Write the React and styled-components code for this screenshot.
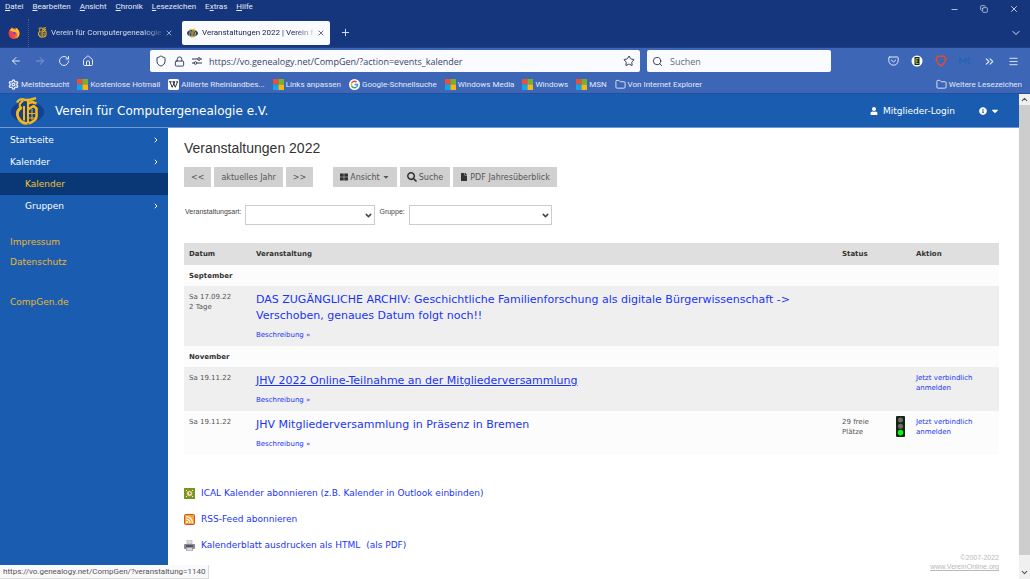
import React from 'react'
import styled, { createGlobalStyle } from 'styled-components'
import {
    ArrowLeft, ArrowRight, RotateCw, House, Shield, Lock, Star, Search, Folder, Settings,
    ChevronDown, ChevronUp, ChevronRight, ChevronsRight, Menu, Minus, X, Plus, Copy
} from 'lucide-react'
import { FaUser, FaInfoCircle, FaCaretDown, FaThLarge, FaSearch, FaFile } from 'react-icons/fa'

const GlobalStyle = createGlobalStyle`
    * {
        box-sizing: border-box;
    }

    body {
        margin: 0;
        background: #fff;
        font-family: "DejaVu Sans", Verdana, sans-serif;
        color: #444;
    }

    a {
        color: #1a35f5;
        text-decoration: none;
    }

    button, input, select {
        font: inherit;
        margin: 0;
        border: none;
        border-radius: 0;
        padding: 0;
    }

    button {
        background: none;
        color: inherit;
    }

    svg {
        flex: none;
        display: block;
    }
`

const Window = styled.div`
    min-height: 100vh;
    display: flex;
    flex-direction: column;
`

/* browser chrome */

const Chrome = styled.header`
    font-family: Roboto, "Segoe UI", sans-serif;
    font-size: 8px;
    color: #e4eaf8;
    background: #15367c;
`

const TitleBar = styled.div`
    height: 18px;
    display: flex;
    justify-content: space-between;
    padding: 0 11px 0 5px;
`

const MenuBar = styled.nav`
    display: flex;
    gap: 9px;
    line-height: 13px;
`

const WindowButtons = styled.div`
    display: flex;
    align-items: center;
    gap: 21px;
`

const TabStrip = styled.div`
    height: 30px;
    display: flex;
    align-items: center;
    padding: 0 8px;
    border-bottom: 1px solid #1e3f8a;
`

const Pinned = styled.div`
    height: 28px;
    width: 21px;
    display: flex;
    align-items: center;
    border-right: 1px dotted #47609a;
`

const Tab = styled.div`
    width: 148px;
    height: 24px;
    margin-left: ${p => p.$active ? 5 : 0}px;
    padding: 0 6px 0 ${p => p.$active ? 5 : 9}px;
    display: flex;
    align-items: center;
    gap: 4px;
    border-radius: 2px;
    color: ${p => p.$active ? '#22284a' : '#d3dcf0'};
    background: ${p => p.$active ? '#f9fbff' : 'none'};
`

const TabTitle = styled.span`
    flex: 1;
    white-space: nowrap;
    mask-image: linear-gradient(to right, #000 84%, rgba(0, 0, 0, 0.2));
`

const NewTab = styled.button`
    margin-left: 10px;
`

const ListTabs = styled.button`
    margin-left: auto;
`

const Toolbar = styled.div`
    height: 28px;
    display: flex;
    align-items: center;
    background: #3d66b6;
    padding: 0 11px 2px 10px;
`

const NavButtons = styled.div`
    width: 140px;
    display: flex;
    gap: 12px;

    button:nth-child(2) {
        opacity: 0.4;
    }
`

const Field = styled.label`
    flex: ${p => p.$grow};
    height: 22px;
    margin-left: ${p => p.$gap}px;
    padding: 0 5px;
    display: flex;
    align-items: center;
    gap: 7px;
    border-radius: 2px;
    background: #f9fbff;
    color: #33384e;

    input {
        flex: 1;
        min-width: 0;
        background: none;
        outline: none;
        font: 9px "Open Sans", "Segoe UI", sans-serif;
        color: #3a4366;
    }

    input::placeholder {
        color: #666b7c;
        opacity: 1;
    }
`

const Extensions = styled.div`
    width: 188px;
    display: flex;
    justify-content: flex-end;
    align-items: center;
    gap: 12px;
`

const Bookmarks = styled.nav`
    height: 18px;
    display: flex;
    align-items: center;
    gap: 8px;
    padding: 0 8px 1px;
    background: #3d66b6;
    border-bottom: 1px solid #234d9f;
`

const Bookmark = styled.a`
    display: flex;
    align-items: center;
    gap: 2px;
    white-space: nowrap;
    color: #e4eaf8;
    margin-left: ${p => p.$last ? 'auto' : 0};
`

/* web page */

const View = styled.div`
    flex: 1;
    display: flex;
`

const Page = styled.div`
    flex: 1;
    display: flex;
    flex-direction: column;
`

const PageHeader = styled.header`
    height: 34px;
    display: flex;
    align-items: center;
    padding: 0 19px 0 11px;
    color: #fff;
    background: #1a5cb0;
    border-bottom: 1px solid #6f98d2;
`

const SiteName = styled.div`
    margin-left: 11px;
    font-size: 12px;
`

const Login = styled.a`
    margin-left: auto;
    display: flex;
    align-items: center;
    gap: 5px;
    font-size: 9px;
    color: #fff;
`

const Info = styled.button`
    margin-left: 24px;
    display: flex;
    align-items: center;
    gap: 3px;
`

const Columns = styled.div`
    flex: 1;
    display: flex;
`

const Sidebar = styled.nav`
    width: 168px;
    padding-top: 1px;
    background: #1a5cb0;
    font-size: 9px;
`

const NavItem = styled.a`
    height: 22px;
    padding: 0 8px 0 ${p => p.$sub ? 25 : 10}px;
    display: flex;
    align-items: center;
    justify-content: space-between;
    color: ${p => p.$current ? '#f2c230' : '#fff'};
    background: ${p => p.$current ? '#0a3877' : 'none'};
`

const SideLinks = styled.div`
    margin-top: ${p => p.$gap}px;
    padding-left: 10px;
    line-height: 20px;

    a {
        display: block;
        color: #e8b72f;
    }
`

const Main = styled.main`
    flex: 1;
    display: flex;
    flex-direction: column;
    padding: 10px 20px 8px 16px;
`

const Title = styled.h1`
    margin: 0 0 8px;
    font: 14px/21px "Liberation Sans", Arial, sans-serif;
    color: #333;
`

const Actions = styled.div`
    display: flex;
    gap: 3px;
`

const ActionGroup = styled.div`
    display: flex;
    gap: 3px;
    margin-right: 17px;
`

const Action = styled.button`
    height: 20px;
    padding: 0 7px;
    display: flex;
    align-items: center;
    gap: 2px;
    font-size: 8px;
    color: #555;
    background: #d0d0d0;
`

const Filters = styled.form`
    display: flex;
    margin: 18px 0 18px 1px;
    gap: 4px;
    font: 7px/14px "Liberation Sans", Arial, sans-serif;
`

const SelectBox = styled.div`
    display: grid;
    align-items: center;
    justify-items: end;
    width: ${p => p.$width}px;

    select, svg {
        grid-area: 1 / 1;
    }

    select {
        width: 100%;
        height: 20px;
        appearance: none;
        border: 1px solid #ccc;
        background: #fff;
    }

    svg {
        margin-right: 2px;
        pointer-events: none;
    }
`

const Events = styled.table`
    width: 100%;
    table-layout: fixed;
    border-collapse: collapse;
    font-size: 7px;
    line-height: 10px;
    color: #555;

    th, td {
        padding: 6px 5px;
        text-align: left;
        vertical-align: top;
    }

    th {
        color: #333;
        background: #fcfcfc;
    }

    tbody th {
        padding-bottom: 5px;
    }

    thead th {
        background: #dfdfdf;
    }
`

const EventRow = styled.tr`
    background: ${p => p.$shade ? '#efefef' : '#fcfcfc'};

    td:nth-child(4) {
        padding: 5px 0;
    }
`

const EventTitle = styled.a`
    display: block;
    margin-bottom: 6px;
    font-size: 11px;
    line-height: 16px;
    text-decoration: ${p => p.$hovered ? 'underline' : 'none'};
`

const Exports = styled.div`
    display: grid;
    gap: 10px;
    margin-top: 30px;
    font-size: 9px;
    line-height: 16px;
`

const ExportRow = styled.div`
    display: flex;
    align-items: center;
    gap: 6px;
`

const Credits = styled.footer`
    margin-top: auto;
    text-align: right;
    font: 7px/9px "Liberation Sans", Arial, sans-serif;
    color: #b8b8b8;

    a {
        display: block;
        color: #b8b8b8;
        text-decoration: underline;
    }
`

const Scrollbar = styled.div`
    width: 11px;
    display: flex;
    flex-direction: column;
    align-items: center;
    background: #f0f0f0;
    color: #555;
    padding: 1px 0 2px;
    gap: 1px;
`

const Thumb = styled.div`
    flex: 1;
    width: 11px;
    margin-bottom: 12px;
    background: #cdcdcd;
`

const StatusBubble = styled.div`
    position: fixed;
    left: 0;
    bottom: 0;
    height: 14px;
    padding: 0 3px;
    font: 8px/14px Roboto, "Segoe UI", sans-serif;
    color: #555;
    background: #f9f9fb;
    border: solid #dcdcdc;
    border-width: 0 1px 1px 0;
`

const Logo = ({ width = 33, height = 28, plain }) => (
    <svg width={width} height={height} viewBox={plain ? '5 0 23 28' : '0 0 33 28'}>
        {!plain && <ellipse cx="16.500" cy="15" rx="16.500" ry="10.500" fill="#163f8c" />}
        <g fill="none" stroke="#f6b818" strokeLinejoin="round">
            <path d="M6 5.500C8 1.500 11 2 14.500 2.800S20 2.500 25 1.200" strokeWidth="2.400" />
            <path d="M12 3.500 8.800 7v2.500l2 1.500" strokeWidth="2" />
            <path d="M10.500 10.500C6.500 13 5.500 17 7.500 21s5.500 5.500 9 5.300" strokeWidth="2.800" />
            <path d="M13 9v14.500M17 4v22" strokeWidth="2" />
            <path d="M17 6.500l4-1.500 4.500 1.500M17 12.500l5.500-3.500 3 2.500v8c0 3-4 5.500-8 7" strokeWidth="2.600" />
            <path d="M21 12v11M17 16.500h7M17 21h7" strokeWidth="1" />
        </g>
    </svg>
)

const Firefox = () => (
    <svg width="12" height="12" viewBox="0 0 24 24">
        <circle cx="12" cy="13" r="10.500" fill="#ff6a2b" />
        <path d="M3 8c2-5 4-5 5-7 1 4 5 3 7 5s1-3 0-5c6 3 9 8 8 14-1 4-4 7-7 8 4-4 4-10 0-12-5-2-9 1-13-3z" fill="#ffbe2e" />
        <path d="M1.500 13C1 9 3 6 4 5c0 3 4 4 7 5l-3 4c1 4 6 5 9 2-2 5-9 8-13 3-1-1-2-3-2.500-6z" fill="#f33b4c" />
        <circle cx="12.500" cy="12.500" r="3" fill="#7646d8" />
    </svg>
)

const Microsoft = () => (
    <svg width="11" height="11" viewBox="0 0 12 12">
        <path fill="#e8503a" d="M0 0h6v6H0z" />
        <path fill="#7cb02c" d="M6 0h6v6H6z" />
        <path fill="#12a5ee" d="M0 6h6v6H0z" />
        <path fill="#f6b714" d="M6 6h6v6H6z" />
    </svg>
)

const Wikipedia = () => (
    <svg width="11" height="11" viewBox="0 0 12 12">
        <rect width="12" height="12" rx="2" fill="#fff" />
        <path d="M1 3h3M5 3h2.500M9 3h2M2.300 3l2.200 6L7.500 3M5.500 3L8 9l2.300-6" fill="none" stroke="#222" />
    </svg>
)

const Google = () => (
    <svg width="11" height="11" viewBox="0 0 12 12">
        <circle cx="6" cy="6" r="6" fill="#fff" />
        <g fill="none" strokeWidth="1.500">
            <path d="M8.300 3.400A3.500 3.500 0 0 0 2.800 4.600" stroke="#ea4335" />
            <path d="M2.800 4.600a3.500 3.500 0 0 0 0 2.900" stroke="#fbbc05" />
            <path d="M2.800 7.500a3.500 3.500 0 0 0 5.400 1.200" stroke="#34a853" />
            <path d="M8.200 8.700A3.500 3.500 0 0 0 9.400 6H6" stroke="#4285f4" />
        </g>
    </svg>
)

const Pocket = () => (
    <svg width="11" height="10" viewBox="0 0 11 10" fill="none" stroke="currentColor" strokeLinecap="round" strokeLinejoin="round">
        <path d="M1.500 1h8q.7 0 .7.700V4.500a4.700 4.700 0 0 1-9.400 0V1.700Q.8 1 1.500 1zM3.300 4l2.200 2 2.200-2" />
    </svg>
)

const Permissions = () => (
    <svg width="10" height="8" viewBox="0 0 10 8" fill="none" stroke="#33384e">
        <path d="M0 2h5.500M5 6h5M0 6h2M8.500 2H10" />
        <circle cx="7" cy="2" r="1.300" />
        <circle cx="3.500" cy="6" r="1.300" />
    </svg>
)

const TrafficLight = () => (
    <svg width="9" height="21" viewBox="0 0 9 21">
        <rect width="9" height="21" rx="1" fill="#152415" />
        <circle cx="4.500" cy="4" r="2.500" fill="#6b706b" />
        <circle cx="4.500" cy="10.300" r="2.500" fill="#6b706b" />
        <circle cx="4.500" cy="16.600" r="2.800" fill="#0af50a" />
    </svg>
)

const IcalIcon = () => (
    <svg width="11" height="11" viewBox="0 0 11 11">
        <rect width="11" height="11" fill="#6d9a22" />
        <path d="M2 2l7 7M9 2L2 9" stroke="#fff3c0" />
        <circle cx="5.500" cy="5.500" r="2.800" fill="#f5e6b0" stroke="#b07f28" strokeWidth=".7" />
        <path d="M5.500 4v2l1.500-1" fill="none" stroke="#7a6420" strokeWidth=".7" />
    </svg>
)

const RssIcon = () => (
    <svg width="11" height="11" viewBox="0 0 11 11">
        <rect x=".5" y=".5" width="10" height="10" rx="1" fill="#f0a63c" stroke="#d9501f" />
        <circle cx="3" cy="8" r="1" fill="#fff" />
        <path d="M2 5a4 4 0 0 1 4 4M2 2.500A6.500 6.500 0 0 1 8.500 9" fill="none" stroke="#fff" strokeWidth="1.200" />
    </svg>
)

const PrinterIcon = () => (
    <svg width="11" height="11" viewBox="0 0 11 11">
        <path d="M3 0h5v4H3z" fill="#ddd" stroke="#aaa" strokeWidth=".6" />
        <rect y="4" width="11" height="5" rx="1" fill="#85888d" />
        <path d="M2 5h7v2H2z" fill="#55585e" />
        <path d="M2.500 7.500h6V11h-6z" fill="#d4d8de" stroke="#888" strokeWidth=".6" />
    </svg>
)

const menus = [['', 'D', 'atei'], ['', 'B', 'earbeiten'], ['', 'A', 'nsicht'], ['', 'C', 'hronik'], ['', 'L', 'esezeichen'], ['E', 'x', 'tras'], ['', 'H', 'ilfe']]

const bookmarks = [
    ['Meistbesucht', <Settings size={11} strokeWidth={3} />],
    ['Kostenlose Hotmail', <Microsoft />],
    ['Alliierte Rheinlandbes...', <Wikipedia />],
    ['Links anpassen', <Microsoft />],
    ['Google-Schnellsuche', <Google />],
    ['Windows Media', <Microsoft />],
    ['Windows', <Microsoft />],
    ['MSN', <Microsoft />],
    ['Von Internet Explorer', <Folder size={11} />],
    ['Weitere Lesezeichen', <Folder size={11} />]
]

const months = [
    {
        name: 'September',
        events: [
            { date: 'Sa 17.09.22', days: '2 Tage', shade: true, title: 'DAS ZUGÄNGLICHE ARCHIV: Geschichtliche Familienforschung als digitale Bürgerwissenschaft -> Verschoben, genaues Datum folgt noch!!' }
        ]
    },
    {
        name: 'November',
        events: [
            { date: 'Sa 19.11.22', shade: true, hovered: true, open: true, title: 'JHV 2022 Online-Teilnahme an der Mitgliederversammlung' },
            { date: 'Sa 19.11.22', status: '29 freie Plätze', open: true, title: 'JHV Mitgliederversammlung in Präsenz in Bremen' }
        ]
    }
]

const BrowserChrome = () => (
    <Chrome>
        <TitleBar>
            <MenuBar>
                {menus.map(([before, key, after]) => <span key={key}>{before}<u>{key}</u>{after}</span>)}
            </MenuBar>
            <WindowButtons>
                <button aria-label="Minimieren"><Minus size={9} /></button>
                <button aria-label="Verkleinern"><Copy size={8} transform="scale(-1 1) rotate(90)" /></button>
                <button aria-label="Schließen"><X size={10} /></button>
            </WindowButtons>
        </TitleBar>
        <TabStrip>
            <Pinned><Firefox /></Pinned>
            <Tab>
                <Logo width={9} height={11} plain />
                <TabTitle>Verein für Computergenealogie</TabTitle>
                <X size={8} />
            </Tab>
            <Tab $active>
                <Logo width={11} height={10} />
                <TabTitle>Veranstaltungen 2022 | Verein f</TabTitle>
                <X size={8} />
            </Tab>
            <NewTab aria-label="Neuer Tab"><Plus size={11} /></NewTab>
            <ListTabs aria-label="Alle Tabs"><ChevronDown size={12} /></ListTabs>
        </TabStrip>
        <Toolbar>
            <NavButtons>
                <button aria-label="Zurück"><ArrowLeft size={12} /></button>
                <button aria-label="Vor"><ArrowRight size={12} /></button>
                <button aria-label="Neu laden"><RotateCw size={12} /></button>
                <button aria-label="Startseite"><House size={12} /></button>
            </NavButtons>
            <Field $grow={480} $gap={0}>
                <Shield size={12} />
                <Lock size={11} />
                <Permissions />
                <input aria-label="Adresse" defaultValue="https://vo.genealogy.net/CompGen/?action=events_kalender" />
                <Star size={12} />
            </Field>
            <Field $grow={174} $gap={7}>
                <Search size={11} />
                <input aria-label="Suchen" placeholder="Suchen" />
            </Field>
            <Extensions>
                <Pocket />
                <svg width="12" height="12" viewBox="0 0 12 12">
                    <circle cx="6" cy="6" r="5.500" fill="#fff" />
                    <path d="M3.500 2h5v8h-5z" fill="#222" />
                    <path d="M7.500 3.500H5v5h2.500M5 6h2" fill="none" stroke="#8fd02c" />
                </svg>
                <svg width="12" height="12" viewBox="0 0 12 12">
                    <path d="M3 1.200h6L11 4 8.800 8.500 6 11 3.200 8.500 1 4z" fill="none" stroke="#ea4b2c" strokeWidth="1.400" />
                </svg>
                <svg width="12" height="12" viewBox="0 0 12 12">
                    <path d="M1 9V3l3 4 3-4v6M8 6h3M9 3l2 1M9 9l2-1" fill="none" stroke="#1762b5" />
                </svg>
                <ChevronsRight size={13} />
                <Menu size={11} />
            </Extensions>
        </Toolbar>
        <Bookmarks>
            {bookmarks.map(([label, icon], i) => (
                <Bookmark href="#" key={label} $last={i === bookmarks.length - 1}>{icon}{label}</Bookmark>
            ))}
        </Bookmarks>
    </Chrome>
)

const EventTable = () => (
    <Events>
        <colgroup>
            <col width="67" />
            <col />
            <col width="59" />
            <col width="15" />
            <col width="88" />
        </colgroup>
        <thead>
            <tr><th>Datum</th><th>Veranstaltung</th><th>Status</th><th /><th>Aktion</th></tr>
        </thead>
        {months.map(month => (
            <tbody key={month.name}>
                <tr><th colSpan="5">{month.name}</th></tr>
                {month.events.map(event => (
                    <EventRow key={event.title} $shade={event.shade}>
                        <td>{event.date}{event.days && <><br />{event.days}</>}</td>
                        <td>
                            <EventTitle href="#" $hovered={event.hovered}>{event.title}</EventTitle>
                            <a href="#">Beschreibung »</a>
                        </td>
                        <td>{event.status}</td>
                        <td>{event.status && <TrafficLight />}</td>
                        <td>{event.open && <a href="#">Jetzt verbindlich anmelden</a>}</td>
                    </EventRow>
                ))}
            </tbody>
        ))}
    </Events>
)

const App = () => (
    <Window>
        <GlobalStyle />
        <BrowserChrome />
        <View>
            <Page>
                <PageHeader>
                    <Logo />
                    <SiteName>Verein für Computergenealogie e.V.</SiteName>
                    <Login href="#"><FaUser size={8} />Mitglieder-Login</Login>
                    <Info aria-label="Info"><FaInfoCircle size={8} /><FaCaretDown size={10} /></Info>
                </PageHeader>
                <Columns>
                    <Sidebar>
                        <NavItem href="#">Startseite<ChevronRight size={8} strokeWidth={3} /></NavItem>
                        <NavItem href="#">Kalender<ChevronRight size={8} strokeWidth={3} /></NavItem>
                        <NavItem href="#" $sub $current>Kalender</NavItem>
                        <NavItem href="#" $sub>Gruppen<ChevronRight size={8} strokeWidth={3} /></NavItem>
                        <SideLinks $gap={15}>
                            <a href="#">Impressum</a>
                            <a href="#">Datenschutz</a>
                        </SideLinks>
                        <SideLinks $gap={20}>
                            <a href="#">CompGen.de</a>
                        </SideLinks>
                    </Sidebar>
                    <Main>
                        <Title>Veranstaltungen 2022</Title>
                        <Actions>
                            <ActionGroup>
                                <Action>&lt;&lt;</Action>
                                <Action>aktuelles Jahr</Action>
                                <Action>&gt;&gt;</Action>
                            </ActionGroup>
                            <Action><FaThLarge size={8} color="#333" />Ansicht<FaCaretDown size={8} /></Action>
                            <Action><FaSearch size={10} color="#333" />Suche</Action>
                            <Action><FaFile size={8} color="#333" />PDF Jahresüberblick</Action>
                        </Actions>
                        <Filters>
                            <label htmlFor="art">Veranstaltungsart:</label>
                            <SelectBox $width={130}>
                                <select id="art" />
                                <ChevronDown size={9} strokeWidth={4} />
                            </SelectBox>
                            <label htmlFor="gruppe">Gruppe:</label>
                            <SelectBox $width={143}>
                                <select id="gruppe" />
                                <ChevronDown size={9} strokeWidth={4} />
                            </SelectBox>
                        </Filters>
                        <EventTable />
                        <Exports>
                            <ExportRow><IcalIcon /><a href="#">ICAL Kalender abonnieren (z.B. Kalender in Outlook einbinden)</a></ExportRow>
                            <ExportRow><RssIcon /><a href="#">RSS-Feed abonnieren</a></ExportRow>
                            <ExportRow><PrinterIcon /><a href="#">Kalenderblatt ausdrucken als HTML</a><a href="#">(als PDF)</a></ExportRow>
                        </Exports>
                        <Credits>©2007-2022<a href="#">www.VereinOnline.org</a></Credits>
                    </Main>
                </Columns>
            </Page>
            <Scrollbar>
                <ChevronUp size={9} strokeWidth={3} />
                <Thumb />
                <ChevronDown size={9} strokeWidth={3} />
            </Scrollbar>
        </View>
        <StatusBubble>https://vo.genealogy.net/CompGen/?veranstaltung=1140</StatusBubble>
    </Window>
)

export default App
